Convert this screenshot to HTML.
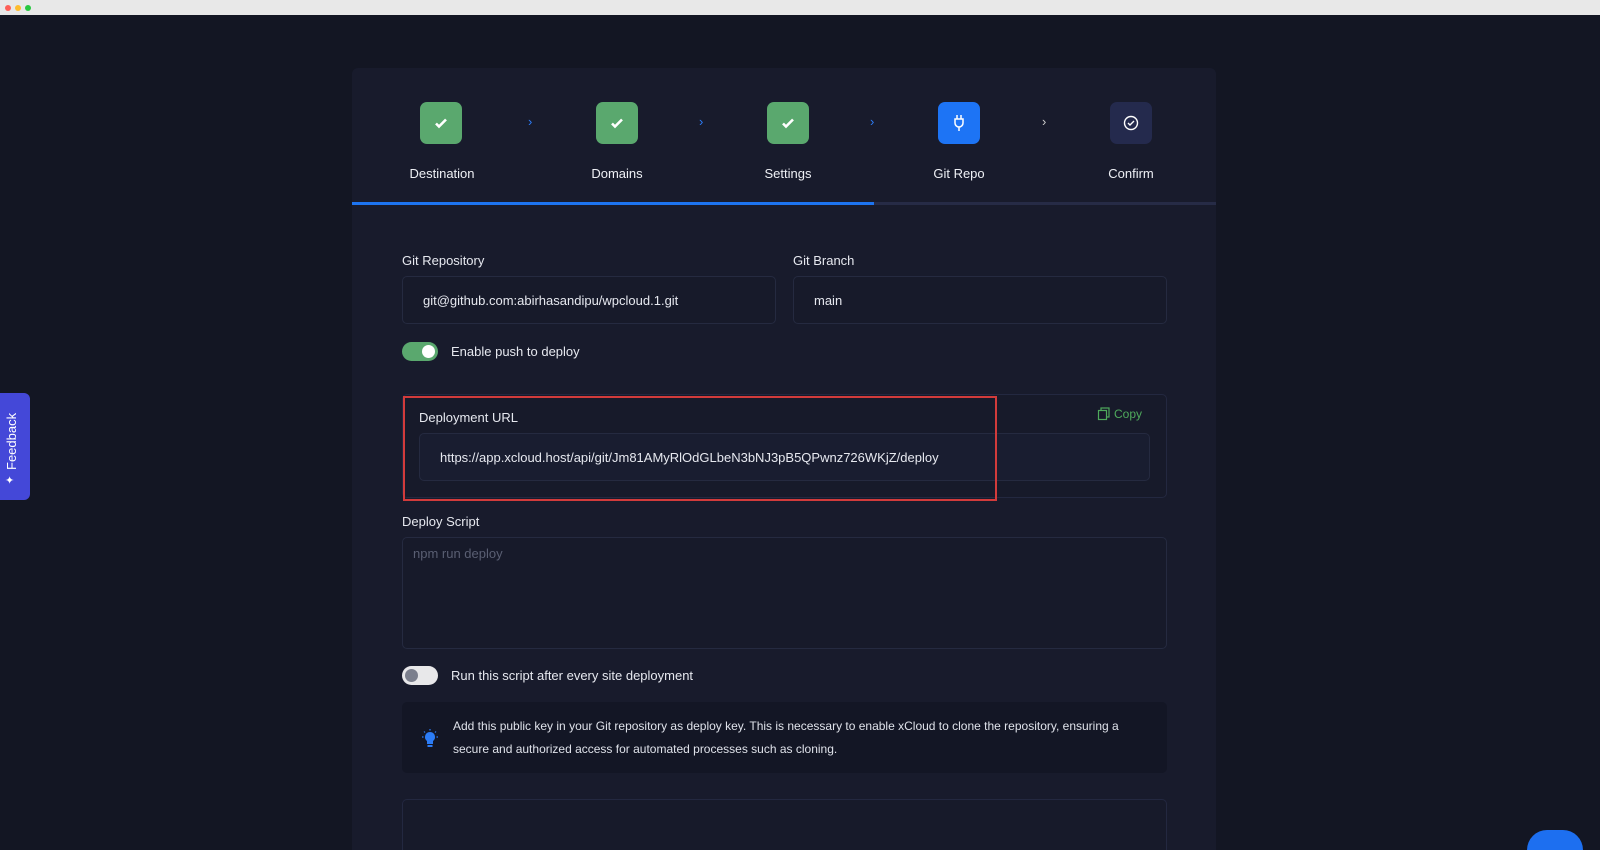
<!DOCTYPE html>
<html><head><style>
*{box-sizing:border-box;margin:0;padding:0}
html{width:1600px;height:850px;overflow:hidden}
body{width:1600px;height:850px;overflow:hidden;background:#131623;font-family:"Liberation Sans",sans-serif;color:#e6e8ef;position:relative}
.top{position:absolute;left:0;top:0;width:1600px;height:15px;background:#e8e8e8}
.dot{position:absolute;top:5px;width:6px;height:6px;border-radius:50%}
.card{position:absolute;left:352px;top:68px;width:864px;height:782px;background:#181b2c;border-radius:6px 6px 0 0}
.step{position:absolute;top:34px;width:42px;height:42px;border-radius:7px;display:flex;align-items:center;justify-content:center}
.g{background:#5aa86e}
.lbl{position:absolute;top:98px;font-size:13px;color:#eef0f5;text-align:center;width:120px}
.chev{position:absolute;top:46px;font-size:13px;color:#2c7cf6}
.bar{position:absolute;top:134px;left:0;width:864px;height:3px;background:#262b46}
.bar div{width:522px;height:3px;background:#1d74f0}
.fl{position:absolute;font-size:13px;color:#e6e8ef}
.inp{position:absolute;border:1px solid #252a40;background:#171a2a;border-radius:5px;font-size:13px;color:#e6e8ef;padding-left:20px;display:flex;align-items:center}
.tog{position:absolute;width:36px;height:19px;border-radius:10px}
.knob{position:absolute;top:3px;width:13px;height:13px;border-radius:50%}
</style></head><body>
<div class="top"><div class="dot" style="left:5px;background:#fe5f57"></div><div class="dot" style="left:15px;background:#febc2e"></div><div class="dot" style="left:25px;background:#28c840"></div></div>

<div style="position:absolute;left:0;top:393px;width:30px;height:107px;background:#4448d8;border-radius:0 6px 6px 0"></div>
<div style="position:absolute;left:4px;top:470px;transform:rotate(-90deg);transform-origin:0 0;font-size:13px;color:#fff;width:70px">Feedback</div>
<div style="position:absolute;left:5px;top:474px;font-size:11px;color:#fff">✦</div>

<div class="card">
<div class="step g" style="left:68px"><svg width="16" height="16" viewBox="0 0 16 16"><path d="M3 8.5l3 3 7-7" stroke="#fff" stroke-width="2.6" fill="none"/></svg></div>
<div class="step g" style="left:244px"><svg width="16" height="16" viewBox="0 0 16 16"><path d="M3 8.5l3 3 7-7" stroke="#fff" stroke-width="2.6" fill="none"/></svg></div>
<div class="step g" style="left:415px"><svg width="16" height="16" viewBox="0 0 16 16"><path d="M3 8.5l3 3 7-7" stroke="#fff" stroke-width="2.6" fill="none"/></svg></div>
<div class="step" style="left:586px;background:#1d74f5"><svg width="14" height="18" viewBox="0 0 14 18"><path d="M5 1v4M9 1v4M3 5h8v4a4 4 0 0 1-8 0zM7 13v4" stroke="#fff" stroke-width="1.5" fill="none"/></svg></div>
<div class="step" style="left:758px;background:#242a4d"><svg width="16" height="16" viewBox="0 0 16 16"><circle cx="8" cy="8" r="6.5" stroke="#fff" stroke-width="1.4" fill="none"/><path d="M5 8l2 2 4-4" stroke="#fff" stroke-width="1.4" fill="none"/></svg></div>
<div class="chev" style="left:176px">›</div><div class="chev" style="left:347px">›</div><div class="chev" style="left:518px">›</div><div class="chev" style="left:690px;color:#ccc">›</div>
<div class="lbl" style="left:30px">Destination</div>
<div class="lbl" style="left:205px">Domains</div>
<div class="lbl" style="left:376px">Settings</div>
<div class="lbl" style="left:547px">Git Repo</div>
<div class="lbl" style="left:719px">Confirm</div>
<div class="bar"><div></div></div>
</div>

<div class="fl" style="left:402px;top:253px">Git Repository</div>
<div class="fl" style="left:793px;top:253px">Git Branch</div>
<div class="inp" style="left:402px;top:276px;width:374px;height:48px">git@github.com:abirhasandipu/wpcloud.1.git</div>
<div class="inp" style="left:793px;top:276px;width:374px;height:48px">main</div>
<div class="tog" style="left:402px;top:342px;background:#5aa86e"><div class="knob" style="left:20px;background:#fff"></div></div>
<div class="fl" style="left:451px;top:344px">Enable push to deploy</div>

<div style="position:absolute;left:402px;top:394px;width:765px;height:104px;border:1px solid #232840;border-radius:5px;background:#171a2a"></div>
<div class="fl" style="left:419px;top:410px">Deployment URL</div>
<div style="position:absolute;left:1097px;top:407px;font-size:12px;color:#4faa5c;display:flex;align-items:center">
<svg width="14" height="14" viewBox="0 0 14 14" style="margin-right:3px"><rect x="4" y="1" width="8" height="9" stroke="#4faa5c" stroke-width="1.2" fill="none"/><rect x="1.5" y="3.5" width="8" height="9" stroke="#4faa5c" stroke-width="1.2" fill="#171a2a"/></svg>Copy</div>
<div class="inp" style="left:419px;top:433px;width:731px;height:48px;background:#191d30">https://app.xcloud.host/api/git/Jm81AMyRlOdGLbeN3bNJ3pB5QPwnz726WKjZ/deploy</div>
<div style="position:absolute;left:403px;top:396px;width:594px;height:105px;border:2px solid #d23b3b"></div>

<div class="fl" style="left:402px;top:514px">Deploy Script</div>
<div class="inp" style="left:402px;top:537px;width:765px;height:112px;align-items:flex-start;padding:8px 0 0 10px;color:#5a5f73">npm run deploy</div>
<div class="tog" style="left:402px;top:666px;background:#e8e8ea"><div class="knob" style="left:3px;background:#7b7f8d"></div></div>
<div class="fl" style="left:451px;top:668px">Run this script after every site deployment</div>

<div style="position:absolute;left:402px;top:702px;width:765px;height:71px;background:#131625;border-radius:5px"></div>
<svg style="position:absolute;left:421px;top:729px" width="18" height="20" viewBox="0 0 18 20"><path d="M9 3a5 5 0 0 1 3 9v3H6v-3a5 5 0 0 1 3-9z" fill="#2c7cf6"/><rect x="6.5" y="16" width="5" height="2" fill="#2c7cf6"/><path d="M9 0v1.5M1 8h1.5M15.5 8H17M3 2.5l1 1M15 2.5l-1 1" stroke="#2c7cf6" stroke-width="1.2"/></svg>
<div style="position:absolute;left:453px;top:715px;width:690px;font-size:12px;line-height:23px;color:#dfe2ea">Add this public key in your Git repository as deploy key. This is necessary to enable xCloud to clone the repository, ensuring a secure and authorized access for automated processes such as cloning.</div>

<div style="position:absolute;left:402px;top:799px;width:765px;height:51px;border:1px solid #232840;border-bottom:none;border-radius:5px 5px 0 0;background:#171a2a"></div>
<div style="position:absolute;left:1527px;top:830px;width:56px;height:20px;border-radius:28px 28px 0 0;background:#1d6ff0"></div>
</body></html>
